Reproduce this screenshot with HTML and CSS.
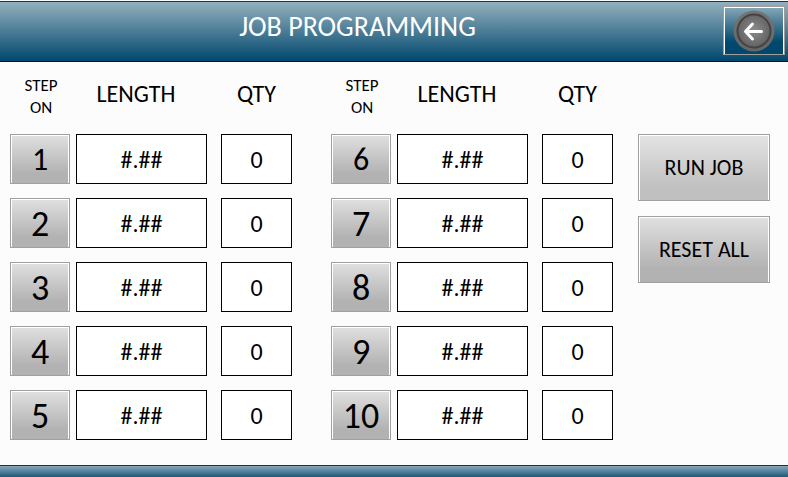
FILE: index.html
```html
<!DOCTYPE html>
<html lang="en">
<head>
<meta charset="utf-8">
<meta name="viewport" content="width=device-width, initial-scale=1">
<title>Job Programming</title>
<link rel="stylesheet" href="styles.css">
</head>
<body>
<header class="topbar">
  <h1 class="title">JOB PROGRAMMING</h1>
  <button class="back" type="button" aria-label="Back">
    <svg class="back-icon" viewBox="0 0 42 42" aria-hidden="true">
      <defs>
        <radialGradient id="knob" cx="50%" cy="48%" r="52%">
          <stop offset="0" stop-color="#8c8c8c"/>
          <stop offset="1" stop-color="#626262"/>
        </radialGradient>
        <linearGradient id="rim" x1="0" y1="0" x2="0" y2="1">
          <stop offset="0" stop-color="#757575"/>
          <stop offset="1" stop-color="#656565"/>
        </linearGradient>
      </defs>
      <circle cx="21" cy="21" r="20.5" fill="url(#rim)"/>
      <circle cx="21" cy="21" r="16.5" fill="url(#knob)" stroke="#434343" stroke-width="2"/>
      <path d="M28.500 21.500H13M19.500 14L12.500 21.500L19.500 29" fill="none" stroke="#fff" stroke-width="3" stroke-linecap="round" stroke-linejoin="round"/>
    </svg>
  </button>
</header>
<main class="panel">
  <section class="group" aria-label="Steps 1 to 5">
    <span class="head step-head">STEP<br>ON</span>
    <span class="head length-head" id="len-a">LENGTH</span>
    <span class="head qty" id="qty-a">QTY</span>
    <button class="key step first" type="button" id="s1">1</button>
    <input class="field" type="text" value="#.##" aria-labelledby="len-a s1">
    <span class="qty"><input class="field" type="text" value="0" aria-labelledby="qty-a s1"></span>
    <button class="key step" type="button" id="s2">2</button>
    <input class="field" type="text" value="#.##" aria-labelledby="len-a s2">
    <span class="qty"><input class="field" type="text" value="0" aria-labelledby="qty-a s2"></span>
    <button class="key step" type="button" id="s3">3</button>
    <input class="field" type="text" value="#.##" aria-labelledby="len-a s3">
    <span class="qty"><input class="field" type="text" value="0" aria-labelledby="qty-a s3"></span>
    <button class="key step" type="button" id="s4">4</button>
    <input class="field" type="text" value="#.##" aria-labelledby="len-a s4">
    <span class="qty"><input class="field" type="text" value="0" aria-labelledby="qty-a s4"></span>
    <button class="key step" type="button" id="s5">5</button>
    <input class="field" type="text" value="#.##" aria-labelledby="len-a s5">
    <span class="qty"><input class="field" type="text" value="0" aria-labelledby="qty-a s5"></span>
  </section>
  <section class="group second" aria-label="Steps 6 to 10">
    <span class="head step-head">STEP<br>ON</span>
    <span class="head length-head" id="len-b">LENGTH</span>
    <span class="head qty" id="qty-b">QTY</span>
    <button class="key step first" type="button" id="s6">6</button>
    <input class="field" type="text" value="#.##" aria-labelledby="len-b s6">
    <span class="qty"><input class="field" type="text" value="0" aria-labelledby="qty-b s6"></span>
    <button class="key step" type="button" id="s7">7</button>
    <input class="field" type="text" value="#.##" aria-labelledby="len-b s7">
    <span class="qty"><input class="field" type="text" value="0" aria-labelledby="qty-b s7"></span>
    <button class="key step" type="button" id="s8">8</button>
    <input class="field" type="text" value="#.##" aria-labelledby="len-b s8">
    <span class="qty"><input class="field" type="text" value="0" aria-labelledby="qty-b s8"></span>
    <button class="key step" type="button" id="s9">9</button>
    <input class="field" type="text" value="#.##" aria-labelledby="len-b s9">
    <span class="qty"><input class="field" type="text" value="0" aria-labelledby="qty-b s9"></span>
    <button class="key step" type="button" id="s10">10</button>
    <input class="field" type="text" value="#.##" aria-labelledby="len-b s10">
    <span class="qty"><input class="field" type="text" value="0" aria-labelledby="qty-b s10"></span>
  </section>
  <div class="actions">
    <button class="key action run" type="button">RUN JOB</button>
    <button class="key action" type="button">RESET ALL</button>
  </div>
</main>
<footer class="bottombar"></footer>
</body>
</html>
```

FILE: styles.css
```css
* {
  box-sizing: border-box;
}

body {
  display: flex;
  flex-direction: column;
  min-height: 100vh;
  margin: 0;
  padding-top: 1px;
  background: #fcfcfc;
  color: #000;
  font-family: Carlito, Lato, "Open Sans", sans-serif;
}

button,
input {
  margin: 0;
  color: inherit;
  font-family: inherit;
}

.topbar {
  display: grid;
  grid-template-columns: 1fr 62px;
  align-items: start;
  height: 61px;
  padding: 4px 3px 0 0;
  border-top: 1px solid #1f3338;
  border-bottom: 1px solid #00101f;
  background: linear-gradient(#94b0be, #00486d);
}

.title {
  margin: 0;
  padding: 5px 8px 0 0;
  color: #fff;
  font-size: 28px;
  font-weight: 300;
  line-height: 32px;
  text-align: center;
}

.back {
  display: flex;
  align-items: center;
  justify-content: center;
  height: 49px;
  padding: 0;
  border: 1px solid #a39c98;
  background: linear-gradient(#87a8b8, #00486d 75%);
  box-shadow: inset 1px 1px #fff, inset -1px 0 #fff;
}

.back-icon {
  width: 42px;
  height: 42px;
}

.panel {
  display: grid;
  flex: 1;
  grid-template-columns: 282fr 296fr 132fr;
  column-gap: 25px;
  align-items: start;
  padding: 12px 18px 24px 10px;
}

.group {
  display: grid;
  grid-template-columns: 60fr 131fr 79fr;
  grid-template-rows: 46px;
  grid-auto-rows: 50px;
  gap: 14px 6px;
}

.second {
  padding-left: 14px;
}

.qty {
  display: grid;
  padding-left: 8px;
}

.head {
  padding-top: 9px;
  font-size: 24px;
  line-height: 22px;
  text-align: center;
}

.length-head {
  padding-right: 11px;
}

.step-head {
  padding-top: 1px;
  padding-left: 2px;
  font-size: 17px;
}

.key {
  padding: 0;
  border: 1px solid #a0a0a0;
  background: linear-gradient(#e0e0e0, #b2b2b2 80%);
  box-shadow: inset 1px 1px #fff, inset -1px 0 #fff;
  text-align: center;
}

.step {
  padding-top: 1px;
  font-size: 36px;
  line-height: 40px;
}

.first {
  padding-top: 2px;
  font-size: 32px;
}

.field {
  width: 100%;
  min-width: 0;
  padding: 1px 0 0;
  border: 1px solid #000;
  border-radius: 0;
  background: #fff;
  font-size: 24px;
  text-align: center;
}

.actions {
  display: grid;
  grid-auto-rows: 67px;
  gap: 15px;
  padding-top: 60px;
}

.action {
  font-size: 22px;
}

.run {
  background: linear-gradient(#e4e4e4, #c0c0c0 80%);
}

.bottombar {
  height: 12px;
  border-top: 1px solid #1f3338;
  background: linear-gradient(#87a8b8, #1c5a7d);
}
```
